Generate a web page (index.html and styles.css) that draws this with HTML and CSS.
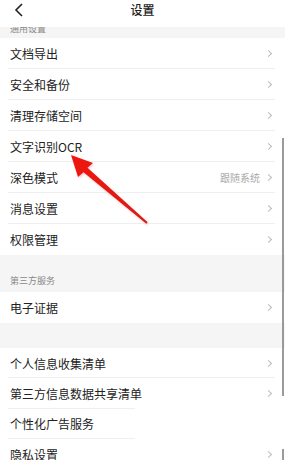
FILE: index.html
```html
<!DOCTYPE html>
<html lang="zh">
<head>
<meta charset="utf-8">
<link rel="stylesheet" href="styles.css">
</head>
<body>
<div class="screen">
  <header class="nav">
    <svg class="back" width="10" height="14" viewBox="0 0 10 14"><path d="M8 1 L2 7 L8 13" fill="none" stroke="#222" stroke-width="1.6"/></svg>
    <div class="title">设置</div>
  </header>
  <div class="viewport">
    <div class="content">
      <div class="sec sec-top"><span>通用设置</span></div>
      <div class="group">
        <div class="row"><span class="label">文档导出</span><span class="chev"></span></div>
        <div class="row"><span class="label">安全和备份</span><span class="chev"></span></div>
        <div class="row"><span class="label">清理存储空间</span><span class="chev"></span></div>
        <div class="row"><span class="label">文字识别OCR</span><span class="chev"></span></div>
        <div class="row"><span class="label">深色模式</span><span class="value">跟随系统</span><span class="chev"></span></div>
        <div class="row"><span class="label">消息设置</span><span class="chev"></span></div>
        <div class="row last"><span class="label">权限管理</span><span class="chev"></span></div>
      </div>
      <div class="sec sec-mid"><span>第三方服务</span></div>
      <div class="group">
        <div class="row last"><span class="label">电子证据</span><span class="chev"></span></div>
      </div>
      <div class="gap"></div>
      <div class="group tight">
        <div class="row"><span class="label">个人信息收集清单</span><span class="chev"></span></div>
        <div class="row short"><span class="label">第三方信息数据共享清单</span><span class="chev"></span></div>
        <div class="row short"><span class="label">个性化广告服务</span></div>
        <div class="row last"><span class="label">隐私设置</span><span class="chev"></span></div>
      </div>
    </div>
  </div>
  <div class="scroll scroll-a"></div>
  <div class="scroll scroll-b"></div>
  <svg class="arrow" width="285" height="460" viewBox="0 0 285 460">
    <defs>
      <linearGradient id="ag" x1="0" y1="0" x2="1" y2="1">
        <stop offset="0" stop-color="#f0160f"/>
        <stop offset="1" stop-color="#d81c16"/>
      </linearGradient>
      <filter id="sh" x="-20%" y="-20%" width="140%" height="140%">
        <feGaussianBlur stdDeviation="0.8"/>
      </filter>
    </defs>
    <polygon points="71,155 93,163 87.5,167.8 147.7,222.3 146.3,223.7 83.5,172.2 78,177" fill="#e99" opacity="0.5" filter="url(#sh)" transform="translate(1,1.5)"/>
    <polygon points="71,155 93,163 87.5,167.8 147.7,222.3 146.3,223.7 83.5,172.2 78,177" fill="url(#ag)"/>
  </svg>
</div>
</body>
</html>
```
FILE: styles.css
```css
* { box-sizing: border-box; }
html, body { margin: 0; padding: 0; }
body {
  width: 285px;
  height: 460px;
  overflow: hidden;
  background: #f5f5f5;
  font-family: "Noto Sans CJK SC", "Noto Sans", sans-serif;
  color: #222;
}
.screen {
  position: relative;
  width: 285px;
  height: 460px;
  overflow: hidden;
  background: #f5f5f5;
}
.nav {
  height: 27px;
  background: #fff;
  display: flex;
  align-items: center;
  justify-content: center;
  position: relative;
}
.back {
  position: absolute;
  left: 14px;
  top: 3px;
}
.title {
  font-size: 12px;
  font-weight: 500;
  color: #222;
  margin-top: -8px;
}
.viewport {
  height: 433px;
  overflow: hidden;
}
.content {
  margin-top: -9px;
}
.sec {
  display: flex;
  align-items: flex-end;
  padding-left: 10px;
  font-size: 9px;
  color: #888;
}
.sec-top {
  height: 20px;
  padding-bottom: 3px;
}
.sec-mid {
  height: 37px;
  padding-bottom: 5px;
}
.group { background: #fff; }
.gap { height: 25px; }
.row {
  height: 31px;
  display: flex;
  align-items: center;
  padding: 0 14px 0 10px;
  position: relative;
  font-size: 12px;
}
.tight .row { height: 30.4px; }
.row::after {
  content: "";
  position: absolute;
  left: 8px;
  right: 10px;
  bottom: 0;
  height: 1px;
  background: #efefef;
}
.row.short::after { right: 150px; }
.row.last::after { display: none; }
.label { flex: 1; color: #222; }
.value {
  font-size: 10px;
  color: #aaa;
  margin-right: 6px;
}
.chev {
  width: 5px;
  height: 5px;
  border-top: 1px solid #bbb;
  border-right: 1px solid #bbb;
  transform: rotate(45deg);
}
.scroll {
  position: absolute;
  right: 1px;
  width: 2px;
  background: #9a9a9a;
}
.scroll-a { top: 138px; height: 258px; }
.scroll-b { top: 449px; height: 11px; }
.arrow {
  position: absolute;
  left: 0;
  top: 0;
  pointer-events: none;
}
```
